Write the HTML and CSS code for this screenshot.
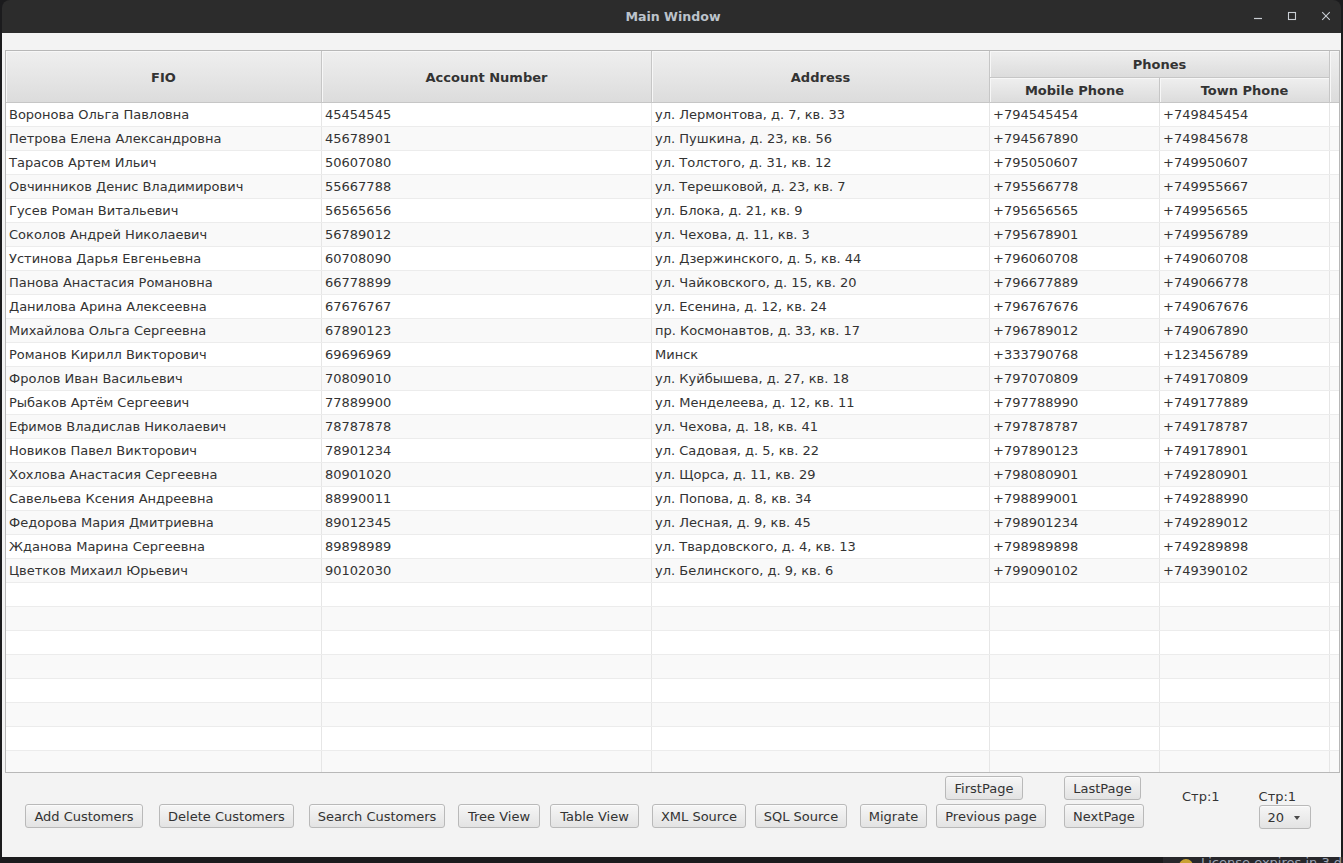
FILE: index.html
```html
<!DOCTYPE html>
<html lang="ru">
<head>
<meta charset="utf-8">
<title>Main Window</title>
<link rel="stylesheet" href="styles.css">
</head>
<body>
<div class="screen">
  <div class="window">
    <div class="titlebar">
      <div></div>
      <div class="title">Main Window</div>
      <div class="controls">
        <span class="ctl"><svg width="10" height="10" viewBox="0 0 10 10"><path d="M1 7.5H9" stroke="#c9ced4" stroke-width="1.2"/></svg></span>
        <span class="ctl"><svg width="10" height="10" viewBox="0 0 10 10"><rect x="1.5" y="1.5" width="7" height="7" fill="none" stroke="#c9ced4" stroke-width="1.1"/></svg></span>
        <span class="ctl"><svg width="10" height="10" viewBox="0 0 10 10"><path d="M1.2 1.2L8.8 8.8M8.8 1.2L1.2 8.8" stroke="#c9ced4" stroke-width="1.1"/></svg></span>
      </div>
    </div>
    <div class="content">
      <div class="table">
        <div class="thead">
          <div class="th span c-fio">FIO</div>
          <div class="th span c-acc">Account Number</div>
          <div class="th span c-addr">Address</div>
          <div class="th c-phones">Phones</div>
          <div class="th c-mob">Mobile Phone</div>
          <div class="th c-town">Town Phone</div>
          <div class="th c-fill"></div>
        </div>
        <div class="tbody">
          <div class="row"><div class="cell">Воронова Ольга Павловна</div><div class="cell">45454545</div><div class="cell">ул. Лермонтова, д. 7, кв. 33</div><div class="cell">+794545454</div><div class="cell">+749845454</div><div class="cell fill"></div></div>
          <div class="row"><div class="cell">Петрова Елена Александровна</div><div class="cell">45678901</div><div class="cell">ул. Пушкина, д. 23, кв. 56</div><div class="cell">+794567890</div><div class="cell">+749845678</div><div class="cell fill"></div></div>
          <div class="row"><div class="cell">Тарасов Артем Ильич</div><div class="cell">50607080</div><div class="cell">ул. Толстого, д. 31, кв. 12</div><div class="cell">+795050607</div><div class="cell">+749950607</div><div class="cell fill"></div></div>
          <div class="row"><div class="cell">Овчинников Денис Владимирович</div><div class="cell">55667788</div><div class="cell">ул. Терешковой, д. 23, кв. 7</div><div class="cell">+795566778</div><div class="cell">+749955667</div><div class="cell fill"></div></div>
          <div class="row"><div class="cell">Гусев Роман Витальевич</div><div class="cell">56565656</div><div class="cell">ул. Блока, д. 21, кв. 9</div><div class="cell">+795656565</div><div class="cell">+749956565</div><div class="cell fill"></div></div>
          <div class="row"><div class="cell">Соколов Андрей Николаевич</div><div class="cell">56789012</div><div class="cell">ул. Чехова, д. 11, кв. 3</div><div class="cell">+795678901</div><div class="cell">+749956789</div><div class="cell fill"></div></div>
          <div class="row"><div class="cell">Устинова Дарья Евгеньевна</div><div class="cell">60708090</div><div class="cell">ул. Дзержинского, д. 5, кв. 44</div><div class="cell">+796060708</div><div class="cell">+749060708</div><div class="cell fill"></div></div>
          <div class="row"><div class="cell">Панова Анастасия Романовна</div><div class="cell">66778899</div><div class="cell">ул. Чайковского, д. 15, кв. 20</div><div class="cell">+796677889</div><div class="cell">+749066778</div><div class="cell fill"></div></div>
          <div class="row"><div class="cell">Данилова Арина Алексеевна</div><div class="cell">67676767</div><div class="cell">ул. Есенина, д. 12, кв. 24</div><div class="cell">+796767676</div><div class="cell">+749067676</div><div class="cell fill"></div></div>
          <div class="row"><div class="cell">Михайлова Ольга Сергеевна</div><div class="cell">67890123</div><div class="cell">пр. Космонавтов, д. 33, кв. 17</div><div class="cell">+796789012</div><div class="cell">+749067890</div><div class="cell fill"></div></div>
          <div class="row"><div class="cell">Романов Кирилл Викторович</div><div class="cell">69696969</div><div class="cell">Минск</div><div class="cell">+333790768</div><div class="cell">+123456789</div><div class="cell fill"></div></div>
          <div class="row"><div class="cell">Фролов Иван Васильевич</div><div class="cell">70809010</div><div class="cell">ул. Куйбышева, д. 27, кв. 18</div><div class="cell">+797070809</div><div class="cell">+749170809</div><div class="cell fill"></div></div>
          <div class="row"><div class="cell">Рыбаков Артём Сергеевич</div><div class="cell">77889900</div><div class="cell">ул. Менделеева, д. 12, кв. 11</div><div class="cell">+797788990</div><div class="cell">+749177889</div><div class="cell fill"></div></div>
          <div class="row"><div class="cell">Ефимов Владислав Николаевич</div><div class="cell">78787878</div><div class="cell">ул. Чехова, д. 18, кв. 41</div><div class="cell">+797878787</div><div class="cell">+749178787</div><div class="cell fill"></div></div>
          <div class="row"><div class="cell">Новиков Павел Викторович</div><div class="cell">78901234</div><div class="cell">ул. Садовая, д. 5, кв. 22</div><div class="cell">+797890123</div><div class="cell">+749178901</div><div class="cell fill"></div></div>
          <div class="row"><div class="cell">Хохлова Анастасия Сергеевна</div><div class="cell">80901020</div><div class="cell">ул. Щорса, д. 11, кв. 29</div><div class="cell">+798080901</div><div class="cell">+749280901</div><div class="cell fill"></div></div>
          <div class="row"><div class="cell">Савельева Ксения Андреевна</div><div class="cell">88990011</div><div class="cell">ул. Попова, д. 8, кв. 34</div><div class="cell">+798899001</div><div class="cell">+749288990</div><div class="cell fill"></div></div>
          <div class="row"><div class="cell">Федорова Мария Дмитриевна</div><div class="cell">89012345</div><div class="cell">ул. Лесная, д. 9, кв. 45</div><div class="cell">+798901234</div><div class="cell">+749289012</div><div class="cell fill"></div></div>
          <div class="row"><div class="cell">Жданова Марина Сергеевна</div><div class="cell">89898989</div><div class="cell">ул. Твардовского, д. 4, кв. 13</div><div class="cell">+798989898</div><div class="cell">+749289898</div><div class="cell fill"></div></div>
          <div class="row"><div class="cell">Цветков Михаил Юрьевич</div><div class="cell">90102030</div><div class="cell">ул. Белинского, д. 9, кв. 6</div><div class="cell">+799090102</div><div class="cell">+749390102</div><div class="cell fill"></div></div>
          <div class="row"><div class="cell"></div><div class="cell"></div><div class="cell"></div><div class="cell"></div><div class="cell"></div><div class="cell fill"></div></div>
          <div class="row"><div class="cell"></div><div class="cell"></div><div class="cell"></div><div class="cell"></div><div class="cell"></div><div class="cell fill"></div></div>
          <div class="row"><div class="cell"></div><div class="cell"></div><div class="cell"></div><div class="cell"></div><div class="cell"></div><div class="cell fill"></div></div>
          <div class="row"><div class="cell"></div><div class="cell"></div><div class="cell"></div><div class="cell"></div><div class="cell"></div><div class="cell fill"></div></div>
          <div class="row"><div class="cell"></div><div class="cell"></div><div class="cell"></div><div class="cell"></div><div class="cell"></div><div class="cell fill"></div></div>
          <div class="row"><div class="cell"></div><div class="cell"></div><div class="cell"></div><div class="cell"></div><div class="cell"></div><div class="cell fill"></div></div>
          <div class="row"><div class="cell"></div><div class="cell"></div><div class="cell"></div><div class="cell"></div><div class="cell"></div><div class="cell fill"></div></div>
          <div class="row"><div class="cell"></div><div class="cell"></div><div class="cell"></div><div class="cell"></div><div class="cell"></div><div class="cell fill"></div></div>
        </div>
      </div>
      <div class="toolbar">
        <button class="btn single b-add">Add Customers</button>
        <button class="btn single b-del">Delete Customers</button>
        <button class="btn single b-search">Search Customers</button>
        <button class="btn single b-tree">Tree View</button>
        <button class="btn single b-table">Table View</button>
        <button class="btn single b-xml">XML Source</button>
        <button class="btn single b-sql">SQL Source</button>
        <button class="btn single b-migrate">Migrate</button>
        <div class="navcol m-prev">
          <button class="btn b-first">FirstPage</button>
          <button class="btn b-previous">Previous page</button>
        </div>
        <div class="navcol m-next">
          <button class="btn b-last">LastPage</button>
          <button class="btn b-nextpage">NextPage</button>
        </div>
        <div class="label m-lbl1">Стр:1</div>
        <div class="pagecol m-lbl2">
          <div class="label">Стр:1</div>
          <div class="combo"><span>20</span><span class="arrow"></span></div>
        </div>
      </div>
    </div>
  </div>
  <div class="taskbar">
    <div class="notice"><span class="warn"></span><span class="notice-text">License expires in 3 days</span></div>
  </div>
</div>
</body>
</html>
```

FILE: styles.css
```css
* { box-sizing: border-box; }
html, body { margin: 0; padding: 0; }
body {
  width: 1343px;
  height: 863px;
  overflow: hidden;
  background: #1b1b1d;
  font-family: "DejaVu Sans", "Liberation Sans", sans-serif;
  font-size: 13px;
  color: #333333;
}
.screen { width: 1343px; height: 863px; display: flex; flex-direction: column; }
.window {
  margin-left: 2px;
  width: 1339px;
  height: 857px;
  display: flex;
  flex-direction: column;
  border-radius: 8px 8px 0 0;
  overflow: hidden;
}
.titlebar {
  height: 33px;
  flex: none;
  background: #2c2c2c;
  display: grid;
  grid-template-columns: 1fr auto 1fr;
  align-items: center;
}
.title {
  color: #bcc3cb;
  font-weight: bold;
  font-size: 12.6px;
  padding-bottom: 1px;
  padding-left: 3px;
}
.controls {
  display: flex;
  justify-content: flex-end;
  gap: 10px;
  padding-right: 3px;
}
.ctl {
  width: 24px;
  height: 24px;
  display: flex;
  align-items: center;
  justify-content: center;
  margin-top: -1px;
}
.content {
  flex: 1;
  background: #f3f3f3;
  padding: 17px 1px 0 3px;
  display: flex;
  flex-direction: column;
}
.table {
  height: 723px;
  border: 1px solid #b8b8b8;
  background: #ffffff;
  display: flex;
  flex-direction: column;
  flex: none;
}
.thead {
  display: grid;
  grid-template-columns: 316px 330px 338px 170px 170px 1fr;
  grid-template-rows: 27px 25px;
  flex: none;
}
.th {
  background: linear-gradient(#efefef, #dcdcdc);
  border-right: 1px solid #c6c6c6;
  border-bottom: 1px solid #c6c6c6;
  box-shadow: inset 1px 1px 0 #f7f7f7;
  font-weight: bold;
  color: #333333;
  display: flex;
  align-items: center;
  justify-content: center;
  white-space: nowrap;
}
.th.span { padding-top: 2px; }
.c-fio { grid-column: 1; grid-row: 1 / 3; }
.c-acc { grid-column: 2; grid-row: 1 / 3; }
.c-addr { grid-column: 3; grid-row: 1 / 3; }
.c-phones { grid-column: 4 / 6; grid-row: 1; }
.c-mob { grid-column: 4; grid-row: 2; }
.c-town { grid-column: 5; grid-row: 2; }
.c-fill { grid-column: 6; grid-row: 1 / 3; border-right: none; }
.tbody { flex: 1; overflow: hidden; }
.row {
  display: grid;
  grid-template-columns: 316px 330px 338px 170px 170px 1fr;
  height: 24px;
  border-bottom: 1px solid #ececec;
  background: #ffffff;
}
.row:nth-child(even) { background: #f9f9f9; }
.cell {
  border-right: 1px solid #e6e6e6;
  padding: 0 3px;
  line-height: 23px;
  white-space: nowrap;
  overflow: hidden;
  color: #333333;
}
.cell.fill { border-right: none; }
.toolbar {
  flex: 1;
  display: flex;
  align-items: flex-start;
  padding-top: 3px;
}
.btn {
  font-family: "DejaVu Sans", "Liberation Sans", sans-serif;
  font-size: 13px;
  color: #333333;
  height: 24px;
  padding: 1px 0 0;
  text-align: center;
  border: 1px solid #b9b9b9;
  border-radius: 3px;
  background: linear-gradient(#f6f6f6, #e3e3e3);
  box-shadow: inset 0 1px 0 #fbfbfb;
  white-space: nowrap;
  line-height: 21px;
  flex: none;
}
.btn.single { margin-top: 28px; }
.b-add { width: 118px; margin-left: 20px; }
.b-del { width: 135px; margin-left: 16px; }
.b-search { width: 136px; margin-left: 15px; }
.b-tree { width: 82px; margin-left: 13px; }
.b-table { width: 89px; margin-left: 10px; }
.b-xml { width: 94px; margin-left: 13px; }
.b-sql { width: 92px; margin-left: 9px; }
.b-migrate { width: 67px; margin-left: 13px; }
.b-first { width: 78px; margin-left: 9px; }
.b-previous { width: 110px; }
.b-last { width: 77px; }
.b-nextpage { width: 80px; }
.navcol {
  display: flex;
  flex-direction: column;
  align-items: flex-start;
  gap: 4px;
}
.m-prev { margin-left: 9px; }
.m-next { margin-left: 18px; }
.label {
  line-height: 16px;
  color: #333333;
  white-space: nowrap;
}
.m-lbl1 { margin-left: 38px; margin-top: 13px; }
.pagecol {
  margin-top: 13px;
  display: flex;
  flex-direction: column;
  align-items: flex-start;
}
.m-lbl2 { margin-left: 39px; }
.combo {
  width: 52px;
  height: 24px;
  border: 1px solid #b9b9b9;
  border-radius: 3px;
  background: linear-gradient(#f6f6f6, #e3e3e3);
  box-shadow: inset 0 1px 0 #fbfbfb;
  display: flex;
  align-items: center;
  padding: 1px 10px 0 8px;
  color: #333333;
}
.arrow {
  margin-left: auto;
  width: 0;
  height: 0;
  border-left: 3.5px solid transparent;
  border-right: 3.5px solid transparent;
  border-top: 4px solid #4a4a4a;
  margin-top: 1px;
}
.taskbar {
  flex: 1;
  background: #1b1b1d;
  display: flex;
  justify-content: flex-end;
  overflow: hidden;
}
.notice {
  width: 180px;
  background: #27272b;
  display: flex;
  align-items: flex-start;
  gap: 8px;
  padding-left: 16px;
  height: 6px;
  overflow: hidden;
}
.warn {
  width: 14px;
  height: 14px;
  border-radius: 50%;
  background: #c9a233;
  margin-top: 2px;
  flex: none;
}
.notice-text {
  color: #9aa3b3;
  font-size: 13px;
  line-height: 16px;
  margin-top: -2px;
  white-space: nowrap;
}
```
